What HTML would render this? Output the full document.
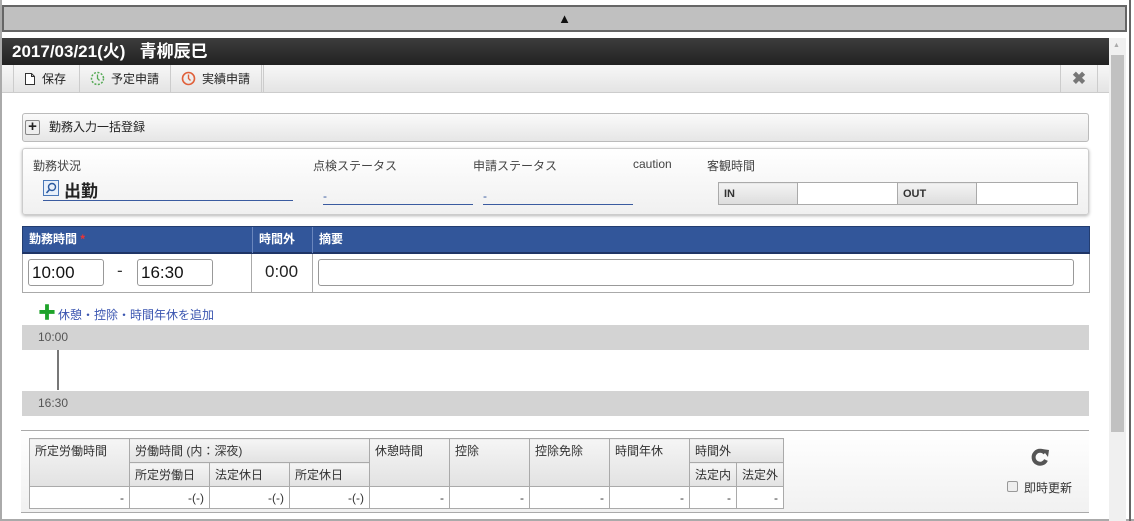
<!DOCTYPE html>
<html><head><meta charset="utf-8"><style>
*{box-sizing:border-box;margin:0;padding:0}
body{width:1134px;height:521px;position:relative;overflow:hidden;background:#fff;font-family:"Liberation Sans","Noto Sans CJK JP",sans-serif;font-size:12px;color:#333}
.a{position:absolute}
.tb{display:flex;align-items:center;gap:6px;height:27px;border-right:1px solid #ccc;padding:0 10px;font-size:12px;color:#222}
table{border-collapse:collapse}
.st td{border:1px solid #aaa;font-size:12px;padding:3px 5px;vertical-align:top;height:22px}
.st .h{background:linear-gradient(#f5f5f5,#e2e2e2)}
.st .v{background:#fff;text-align:right;vertical-align:middle}
</style></head><body>
<div class="a" style="left:0;top:0;width:1134px;height:521px;border-left:2px solid #aaa;border-bottom:2px solid #aaa"></div>
<div class="a" style="left:1129px;top:0;width:2px;height:521px;background:#666"></div>
<div class="a" style="left:2px;top:5px;width:1125px;height:27px;background:#c0c0c0;border:2px solid #666;text-align:center;font-size:13px;line-height:23px;color:#111">▲</div>
<div class="a" style="left:2px;top:38px;width:1107px;height:27px;background:linear-gradient(#3d3d3d,#222);color:#fff;font-weight:bold;font-size:17px;line-height:27px;padding-left:10px">2017/03/21(火)&nbsp;&nbsp;&nbsp;青柳辰巳</div>
<div class="a" style="left:2px;top:65px;width:1107px;height:28px;background:linear-gradient(#f7f7f7,#e4e4e4);border-bottom:1px solid #ccc;display:flex;padding-left:11px">
<div class="tb" style="border-left:1px solid #ccc;width:67px"><svg width="12" height="14"><path d="M1.5 1.5h6l3 3v8h-9z M7.5 1.5v3h3" fill="#fff" stroke="#333"/></svg>保存</div>
<div class="tb" style="width:91px"><svg width="15" height="15"><circle cx="7.5" cy="7.5" r="6" fill="none" stroke="#5a5" stroke-width="1.5" stroke-dasharray="2 1.5"/><path d="M7.5 3.5v4l2 2" fill="none" stroke="#5a5" stroke-width="1.3"/></svg>予定申請</div>
<div class="tb" style="border-right:3px double #ccc;width:93px"><svg width="15" height="15"><circle cx="7.5" cy="7.5" r="6" fill="none" stroke="#e0603a" stroke-width="1.6"/><path d="M7.5 3.5v4l2 2" fill="none" stroke="#e0603a" stroke-width="1.4"/></svg>実績申請</div>
</div>
<div class="a" style="left:1060px;top:65px;width:38px;height:27px;border-left:1px solid #ccc;border-right:1px solid #ccc;text-align:center;line-height:27px;font-size:17px;font-weight:bold;color:#777">✖</div>
<div class="a" style="left:1109px;top:38px;width:17px;height:483px;background:#f0f0f0"></div>
<div class="a" style="left:1111px;top:55px;width:13px;height:377px;background:#c1c1c1"></div>
<div class="a" style="left:1113px;top:42px;font-size:7px;color:#aaa">▲</div>
<div class="a" style="left:22px;top:113px;width:1067px;height:29px;border:1px solid #bbb;border-radius:3px;background:linear-gradient(#fafafa,#e6e6e6);line-height:27px;padding-left:26px;font-size:12px;color:#222">勤務入力一括登録</div>
<div class="a" style="left:25px;top:120px;width:15px;height:15px;border:1px solid #888;border-radius:2px;background:#eee;text-align:center;line-height:12px;font-size:15px;font-weight:bold;color:#222">+</div>
<div class="a" style="left:22px;top:148px;width:1067px;height:67px;border:1px solid #ccc;border-radius:3px;background:linear-gradient(#fff,#f0f0f0);box-shadow:0 1px 3px rgba(0,0,0,.3)"></div>
<div class="a" style="left:33px;top:157px;color:#444">勤務状況</div>
<div class="a" style="left:43px;top:176px;width:250px;height:25px;border-bottom:1px solid #3a5ba0"></div>
<svg class="a" style="left:43px;top:180px" width="16" height="16"><rect x=".5" y=".5" width="15" height="15" fill="#e8f0fa" stroke="#4a78b8"/><circle cx="9" cy="7" r="3.5" fill="none" stroke="#2a5aa0" stroke-width="1.4"/><path d="M6.5 9.5l-3 3.5" stroke="#2a5aa0" stroke-width="1.6"/></svg>
<div class="a" style="left:64px;top:177px;font-size:17px;font-weight:bold;color:#222">出勤</div>
<div class="a" style="left:313px;top:157px;color:#444">点検ステータス</div>
<div class="a" style="left:323px;top:186px;width:150px;height:19px;border-bottom:1px solid #3a5ba0;color:#3a5ba0;padding-top:3px">-</div>
<div class="a" style="left:473px;top:157px;color:#444">申請ステータス</div>
<div class="a" style="left:483px;top:186px;width:150px;height:19px;border-bottom:1px solid #3a5ba0;color:#3a5ba0;padding-top:3px">-</div>
<div class="a" style="left:633px;top:157px;color:#444">caution</div>
<div class="a" style="left:707px;top:157px;color:#444">客観時間</div>
<table class="a" style="left:718px;top:182px;width:360px"><tr style="height:22px">
<td style="border:1px solid #aaa;background:linear-gradient(#f3f3f3,#ddd);width:79px;font-weight:bold;font-size:11px;padding-left:5px">IN</td>
<td style="border:1px solid #aaa;background:#fff;width:100px"></td>
<td style="border:1px solid #aaa;background:linear-gradient(#f3f3f3,#ddd);width:79px;font-weight:bold;font-size:11px;padding-left:5px">OUT</td>
<td style="border:1px solid #aaa;background:#fff"></td></tr></table>
<div class="a" style="left:22px;top:226px;width:1068px;height:67px;border:1px solid #aaa"></div>
<div class="a" style="left:22px;top:226px;width:1068px;height:28px;background:#32569a;border:1px solid #233d70;border-bottom:2px solid #1f3566;color:#fff;font-weight:bold;font-size:12px;line-height:25px">
<span class="a" style="left:6px">勤務時間 <span style="color:#e33">*</span></span>
<span class="a" style="left:229px;top:0;height:26px;border-left:1px solid #6a86bd;padding-left:6px">時間外</span>
<span class="a" style="left:289px;top:0;height:26px;border-left:1px solid #6a86bd;padding-left:6px">摘要</span></div>
<div class="a" style="left:251px;top:254px;width:1px;height:38px;background:#aaa"></div>
<div class="a" style="left:312px;top:254px;width:1px;height:38px;background:#aaa"></div>
<div class="a" style="left:28px;top:259px;width:76px;height:27px;border:1px solid #999;border-radius:3px;font-size:17px;line-height:25px;padding-left:3px;color:#111">10:00</div>
<div class="a" style="left:117px;top:261px;font-size:17px">-</div>
<div class="a" style="left:137px;top:259px;width:76px;height:27px;border:1px solid #999;border-radius:3px;font-size:17px;line-height:25px;padding-left:3px;color:#111">16:30</div>
<div class="a" style="left:265px;top:262px;font-size:17px;color:#222">0:00</div>
<div class="a" style="left:318px;top:259px;width:756px;height:27px;border:1px solid #999;border-radius:3px"></div>
<div class="a" style="left:38px;top:306px;color:#1ea32a;font-size:18px;font-weight:bold;line-height:14px">✚</div>
<div class="a" style="left:58px;top:306px;color:#3a55b0;font-size:12px">休憩・控除・時間年休を追加</div>
<div class="a" style="left:22px;top:325px;width:1067px;height:25px;background:#d3d3d3;padding:5px 0 0 16px;color:#555">10:00</div>
<div class="a" style="left:57px;top:350px;width:2px;height:40px;background:#777"></div>
<div class="a" style="left:22px;top:391px;width:1067px;height:25px;background:#d3d3d3;padding:5px 0 0 16px;color:#555">16:30</div>
<div class="a" style="left:21px;top:430px;width:1068px;height:83px;border-top:1px solid #aaa;border-bottom:1px solid #aaa;background:linear-gradient(#fff,#f1f1f1)"></div>
<table class="a st" style="left:29px;top:438px;width:755px">
<tr><td class="h" rowspan="2" style="width:100px">所定労働時間</td><td class="h" colspan="3">労働時間 (内：深夜)</td><td class="h" rowspan="2" style="width:80px">休憩時間</td><td class="h" rowspan="2" style="width:80px">控除</td><td class="h" rowspan="2" style="width:80px">控除免除</td><td class="h" rowspan="2" style="width:80px">時間年休</td><td class="h" colspan="2">時間外</td></tr>
<tr><td class="h" style="width:80px">所定労働日</td><td class="h" style="width:80px">法定休日</td><td class="h" style="width:80px">所定休日</td><td class="h" style="width:47px">法定内</td><td class="h">法定外</td></tr>
<tr><td class="v">-</td><td class="v">-(-)</td><td class="v">-(-)</td><td class="v">-(-)</td><td class="v">-</td><td class="v">-</td><td class="v">-</td><td class="v">-</td><td class="v">-</td><td class="v">-</td></tr>
</table>
<svg class="a" style="left:1030px;top:447px" width="22" height="22"><path d="M16 13a6.5 6.5 0 1 1-1-7" fill="none" stroke="#555" stroke-width="4"/><path d="M12 2l7 1-1 7z" fill="#555"/></svg>
<div class="a" style="left:1007px;top:481px;width:11px;height:11px;border:1px solid #999;border-radius:2px;background:#eee"></div>
<div class="a" style="left:1024px;top:479px;color:#333">即時更新</div>
</body></html>
